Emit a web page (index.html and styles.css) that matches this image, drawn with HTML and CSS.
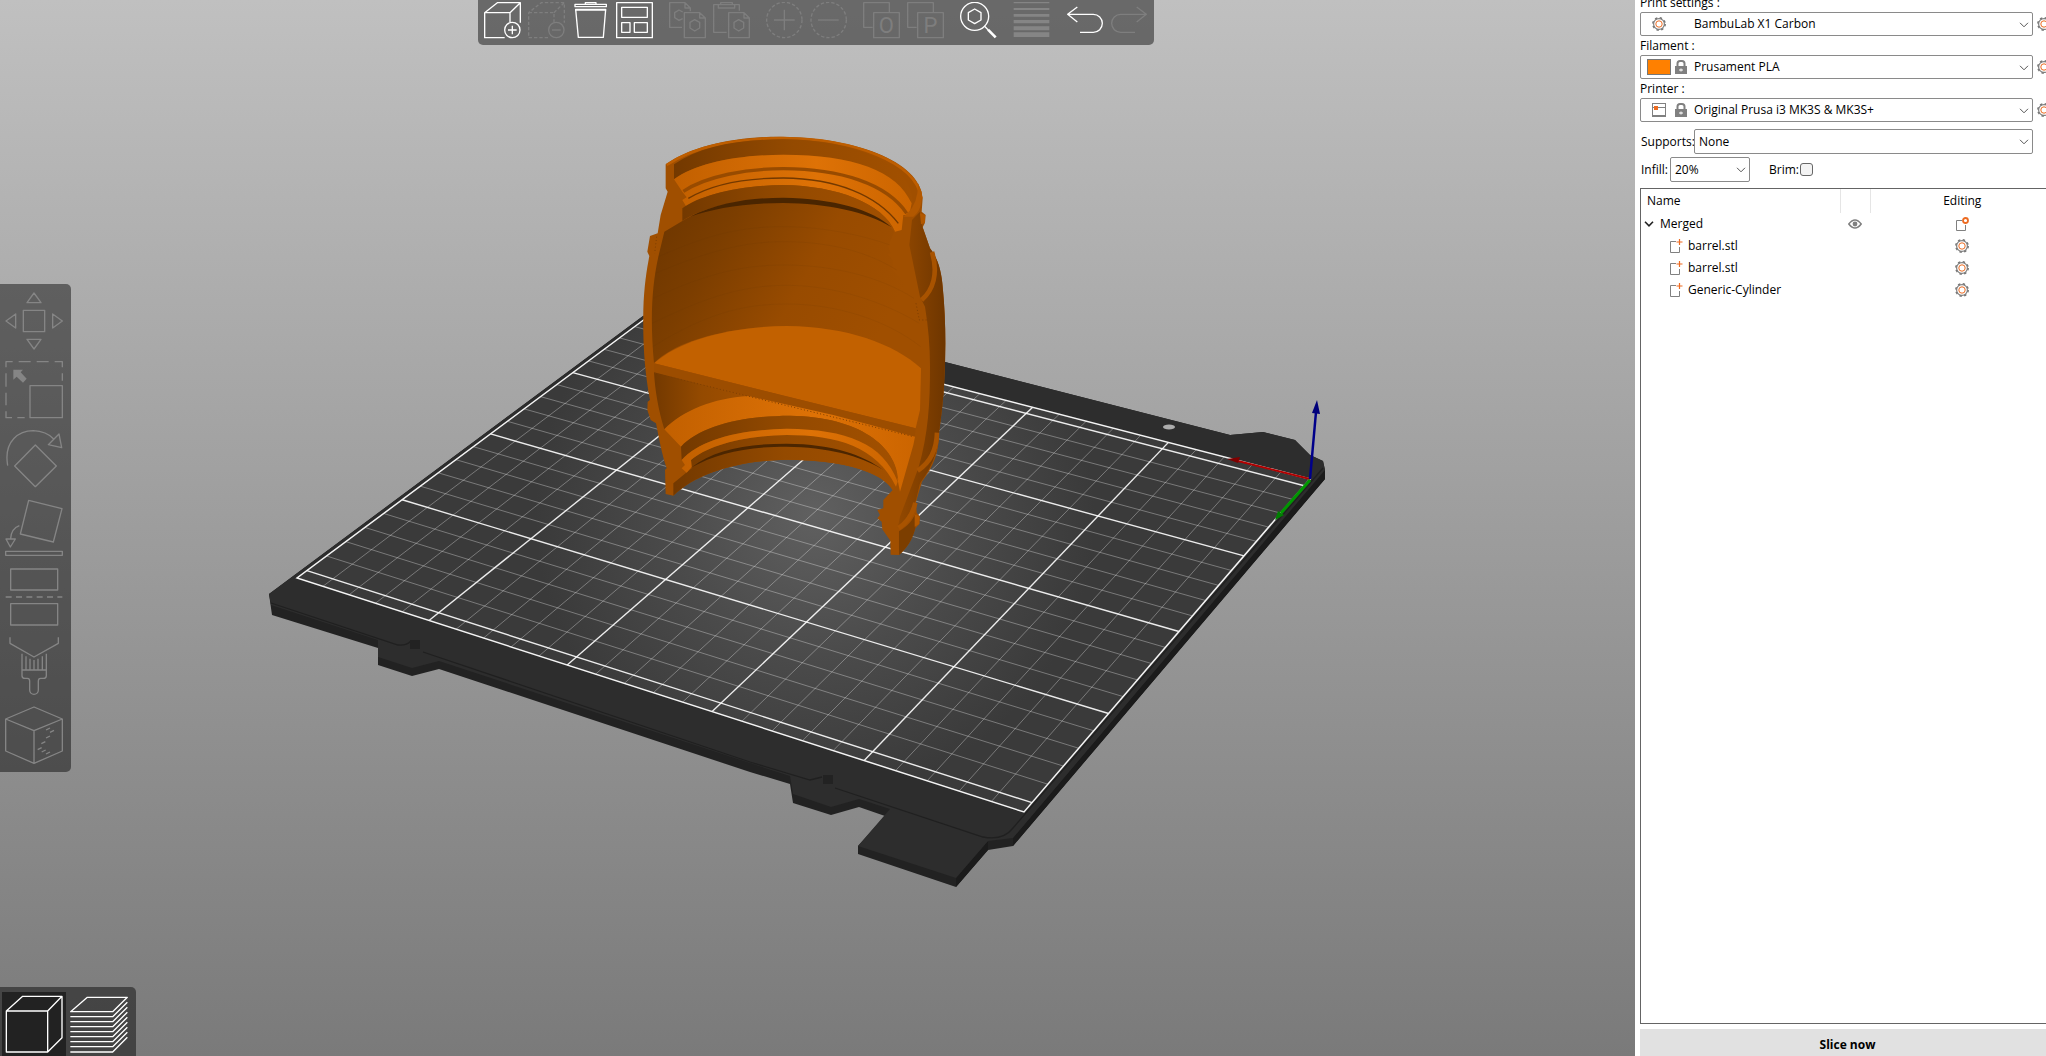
FILE: index.html
```html
<!DOCTYPE html>
<html lang="en">
<head>
<meta charset="utf-8">
<title>Plater</title>
<link rel="stylesheet" href="styles.css">
</head>
<body>
<svg class="defs" aria-hidden="true">
  <symbol id="cog" viewBox="0 0 14 14">
    <circle cx="7" cy="7" r="5.4" fill="none" stroke="#808080" stroke-width="1.2"/>
    <circle cx="7" cy="7" r="6.2" fill="none" stroke="#777" stroke-width="1.5" stroke-dasharray="2.4 2.47"/>
    <circle cx="7" cy="7" r="3.2" fill="none" stroke="#ed6b21" stroke-width="1"/>
  </symbol>
  <symbol id="chevron" viewBox="0 0 10 6"><path d="M1 .8 5 4.8 9 .8" fill="none" stroke="#555"/></symbol>
  <symbol id="lock" viewBox="0 0 12 14">
    <path d="M2.5 7V3.5Q2.5 1 5 1h2q2.500 0 2.500 2.500V7" fill="none" stroke="#808080" stroke-width="2"/>
    <path d="M0 6h12v8H0z" fill="#808080"/><path d="M4 10h4M6 8.500v3" stroke="#fff"/>
  </symbol>
  <symbol id="part" viewBox="0 0 14 14">
    <path d="M7 2.500H1.500v11h9V8" fill="none" stroke="#808080"/>
    <path d="M10.500 0v6M7.500 3h6" stroke="#ed6b21" stroke-width="1.200"/>
  </symbol>
</svg>
<div class="app">
  <main class="viewport">
    <svg class="scene" viewBox="0 0 1635 1056" preserveAspectRatio="xMidYMid slice" role="img" aria-label="Half barrel on the print bed">
      <defs>
        <radialGradient id="bedLight" gradientUnits="userSpaceOnUse" cx="815" cy="515" r="280">
          <stop offset="0" stop-color="#606060"/><stop offset=".5" stop-color="#4b4b4b"/><stop offset="1" stop-color="#3a3a3a"/>
        </radialGradient>
        <linearGradient id="cavity" x1="0" x2="1" y1="0" y2=".35">
          <stop offset="0" stop-color="#6b3500"/><stop offset=".3" stop-color="#7c3e00"/><stop offset=".65" stop-color="#984b00"/><stop offset="1" stop-color="#a04f00"/>
        </linearGradient>
        <linearGradient id="wall"><stop offset="0" stop-color="#733900"/><stop offset=".5" stop-color="#944a00"/><stop offset="1" stop-color="#a25000"/></linearGradient>
        <linearGradient id="lit"><stop offset="0" stop-color="#c26000"/><stop offset=".6" stop-color="#de7206"/><stop offset="1" stop-color="#cc6500"/></linearGradient>
        <linearGradient id="outer"><stop offset="0" stop-color="#944900"/><stop offset="1" stop-color="#6e3600"/></linearGradient>
      </defs>
      <path fill="#222" d="M700 299 643 316 269 594 272 615 378 648V665L412 676 439 669 750 772 790 784 793 803 831 815 859 807 885 816 858 846V854L956 887 988 850 1013 846 1325 479V470L1323 461 1310 455 1295 440 1263 432 1230 435 945 362Z"/>
      <path fill="#1b1b1b" d="M1013 838V846L1325 479 1325 469ZM956 878V887L988 850V841Z"/>
      <path fill="#2d2d2d" d="M700 299 643 316 269 594 271 605 378 640V657L412 668 439 661 750 763 790 776 793 794 831 807 859 799 890 809 858 846 956 878 988 841 1013 838 1325 470 1323 461 1310 455 1295 440 1263 432 1230 435 945 362Z"/>
      <path fill="none" stroke="#202020" stroke-width="1.300" d="M271 603 398 645Q406 646 411 641M423 652 750 762 810 780 822 777M835 788 983 837Q1003 841 1013 828L1323 468"/>
      <path fill="#222" d="M410 640h10v9h-10zM823 775h10v9h-10z"/>
      <ellipse cx="1169" cy="427" rx="6" ry="2.500" fill="#adadad"/>
      <path fill="url(#bedLight)" d="M1310 479 1024 812 297 578 657 310Z"/>
      <g id="grid" class="grid"></g>
      <path fill="none" stroke="#f4f4f4" stroke-width="1.500" d="M1310 479 1024 812 297 578 657 310Z"/>
      <g fill="none" stroke-width="2"><path stroke="#b00000" d="M1310 479 1238 461"/><path stroke="#00008a" stroke-width="2.500" d="M1310 479 1316 412"/><path stroke="#009600" stroke-width="3" d="M1310 480 1281 513"/></g>
      <path fill="#7f0000" d="M1227 459 1240 457 1238 463Z"/><path fill="#00007a" d="M1317 400 1312 413 1320 414Z"/><path fill="#008000" d="M1275 520 1278 511 1284 515Z"/>
      <g transform="translate(620 120) scale(.33333)">
        <path fill="#a04f00" d="M137 133C220 75 350 50 480 50 700 52 900 120 908 235L905 275 917 285 915 308 908 322 930 385C955 415 965 460 968 500 978 600 978 700 972 800 968 860 962 900 957 940 957 1000 940 1040 906 1085L888 1145 890 1178 900 1190 898 1212 886 1225C875 1265 860 1285 837 1305L812 1304 811 1262 787 1228 785 1205 772 1195 780 1185 772 1170 790 1165V1140L818 1110C790 1060 680 1020 500 1019 350 1022 230 1060 160 1127L137 1122 135 1050 140 1045C125 1000 118 960 108 910L92 900 82 870 83 845 90 840C75 760 68 680 70 570 72 500 80 450 88 408L82 395 90 348 113 340 122 285 143 215 137 205Z"/>
        <path fill="url(#cavity)" d="M133 335 187 303C250 262 350 240 490 240 650 242 770 270 822 335L805 380 812 400 804 402 818 420V450L870 505 888 560 900 600 903 745C820 670 680 620 500 618 300 622 160 670 102 730 90 600 95 500 115 410Z"/>
        <g fill="none" stroke="#5f3000" stroke-opacity=".1" stroke-width="3"><path d="M116 410C260 345 360 320 490 320 620 320 740 350 810 375"/><path d="M106 460C260 395 370 365 490 365 640 365 750 400 830 450M100 535C260 460 370 435 490 435 640 435 780 470 882 535M96 610C260 530 370 496 500 496 650 496 800 550 898 610M98 680C260 580 370 552 500 552 650 552 800 600 902 680"/></g>
        <path fill="#c26100" d="M102 730C180 660 330 620 500 618 680 620 820 670 903 745L900 870 887 925Z"/>
        <path fill="#9c4d00" d="M102 730 887 925 884 950 102 757Z"/>
        <path fill="url(#wall)" d="M102 757 385 828C280 840 190 870 133 928 115 870 105 810 102 757Z"/>
        <path fill="url(#lit)" d="M133 928C190 870 280 835 385 828L640 885 885 950 880 975 840 1115 833 1080C830 980 720 890 510 887 360 888 240 920 183 980Z"/>
        <path fill="url(#wall)" d="M183 980C240 920 360 888 510 887 720 890 830 980 835 1080 790 970 680 928 500 926 350 930 240 960 185 1020Z"/>
        <path fill="url(#wall)" d="M213 1020C260 980 360 948 500 945 650 945 770 980 828 1100L818 1110C790 1060 680 1020 500 1019 350 1022 230 1060 160 1127V1090L215 1045Z"/>
        <path fill="url(#lit)" d="M185 1020C240 960 350 930 500 926 680 928 790 970 833 1085L828 1100C770 980 650 945 500 945 360 948 260 980 213 1020L215 1040 200 1058 185 1045 195 1035Z"/>
        <path fill="#4c2600" d="M215 1042C280 990 380 971 500 971 640 972 730 1005 790 1050 720 1005 620 982 500 980 380 980 290 1000 215 1042Z"/>
        <path fill="none" stroke="#be5e00" stroke-width="8" d="M140 135C220 80 350 54 490 54 700 56 890 126 904 235"/>
        <path fill="url(#wall)" d="M162 133C240 80 350 58 490 58 700 60 870 130 878 240L875 250C830 150 700 105 490 104 340 106 230 130 162 178Z"/>
        <path fill="url(#lit)" d="M162 178C230 130 340 106 490 104 700 105 830 150 875 250L868 285H850L845 330 825 335C790 250 650 197 490 195 360 196 240 225 200 262L187 240 200 232 187 215Z"/>
        <path fill="none" stroke="#984b00" stroke-width="10" d="M190 214C260 168 380 146 490 146 660 147 800 190 860 280"/>
        <path fill="none" stroke="#733900" stroke-width="4" d="M205 235C280 190 380 174 490 174 650 176 770 225 835 310"/>
        <path fill="url(#wall)" d="M187 265C240 225 360 196 490 195 650 197 790 250 825 335 770 270 640 235 490 234 360 235 250 262 187 303Z"/>
        <path fill="#4a2500" d="M210 290C300 245 400 233 490 233 640 235 760 270 815 322 740 275 620 250 490 249 380 249 280 265 210 290Z"/>
        <path fill="url(#outer)" d="M868 375 876 300 900 275 908 322 930 385C955 415 965 460 968 500 978 600 978 700 972 800 968 860 962 900 957 940 955 1000 930 1050 900 1090L888 1140C870 1180 855 1205 833 1225L840 1190 895 1045C925 940 930 850 930 740 930 680 925 620 915 560L900 530Z"/>
        <path fill="none" stroke="#a85300" stroke-width="14" d="M905 540C940 510 955 460 936 396M893 1052C935 1025 950 985 951 938M836 1224C865 1205 880 1175 886 1148"/>
        <path fill="#7c3e00" d="M837 1234C865 1218 878 1200 887 1180L886 1225C875 1265 860 1285 837 1305Z"/>
        <path fill="#b25800" d="M880 290C905 270 907 240 905 215L894 190Q895 250 862 280L850 290ZM900 280l15 5v23l-12 5zM884 1182l14 8v22l-14 8z"/>
        <path fill="none" stroke="#7b3d00" stroke-width="3" stroke-dasharray="3 7" d="M105 760 880 950M888 550 898 600H922M110 350 104 400"/>
      </g>
    </svg>

    <div class="toolbar top-bar" role="toolbar" aria-label="Plater">
      <div class="group">
        <button aria-label="Add"><svg viewBox="42 6 111 111"><path d="M104 113H44V38L82 8H151V68M44 38H120V66M120 38 151 8"/><circle cx="127" cy="90" r="23"/><path d="M114 90h26M127 77v26"/></svg></button>
        <button aria-label="Delete" disabled><svg viewBox="174 6 111 111"><path stroke-dasharray="10 6" d="M234 113H176V38L214 8H283V68M176 38H252V66M252 38 283 8"/><circle cx="259" cy="90" r="23"/><path d="M246 90h26"/></svg></button>
        <button aria-label="Delete all"><svg viewBox="306 6 111 111"><path d="M315 13H409V20H315ZM346 13V8H378V13M317 28H407L400 112H325ZM315 30H409"/></svg></button>
        <button aria-label="Arrange"><svg viewBox="438 6 111 111"><path d="M440 8H547V113H440ZM455 22H532V52H455ZM455 68H480V97H455ZM493 68H532V97H493Z"/></svg></button>
      </div>
      <div class="group">
        <button aria-label="Copy" disabled><svg viewBox="597 6 111 111"><path d="M636 82H599V8H645L661 24V34M645 8V24H661M643 38H689L706 54V113H643ZM689 38V54H706M638 36 627 30 614 38V53L627 61 638 56M674 59 689 67V84L674 93 660 84V67Z"/></svg></button>
        <button aria-label="Paste" disabled><svg viewBox="729 6 111 111"><path d="M770 97H731V14H808V32M745 24V14H752V8H787V14H794V24ZM776 38H822L838 54V113H776ZM822 38V54H838M806 59 821 67V84L806 93 792 84V67Z"/></svg></button>
      </div>
      <div class="group">
        <button aria-label="Add instance" disabled><svg viewBox="888 6 111 111"><circle cx="943" cy="60" r="53" stroke-dasharray="10 6"/><path d="M912 60h62M943 29v62"/></svg></button>
        <button aria-label="Remove instance" disabled><svg viewBox="0 6 111 111"><circle cx="56" cy="60" r="53" stroke-dasharray="10 6"/><path d="M24 60h62"/></svg></button>
      </div>
      <div class="group">
        <button aria-label="Split to objects" disabled><svg viewBox="159 6 111 111"><path d="M188 82H161V8H238V36M191 38H268V113H191Z"/><text x="229" y="98" text-anchor="middle">O</text></svg></button>
        <button aria-label="Split to parts" disabled><svg viewBox="291 6 111 111"><path d="M320 82H293V8H370V36M323 38H400V113H323Z"/><text x="361" y="98" text-anchor="middle">P</text></svg></button>
      </div>
      <div class="group"><button aria-label="Search"><svg viewBox="450 6 111 111"><circle cx="494" cy="49" r="42"/><path d="M494 27 513 38V60L494 71 475 60V38ZM523 78 534 89"/><path stroke-width="8" d="M534 89 557 112"/></svg></button></div>
      <div class="group"><button aria-label="Variable layer height" disabled><svg viewBox="609 6 111 111"><path class="solid" d="M611 6h107v4H611zM611 24h107v6H611zM611 42h107v8H611zM611 60h107v10H611zM611 79h107v12H611zM611 97h107v14H611z"/></svg></button></div>
      <div class="group">
        <button aria-label="Undo"><svg viewBox="768 6 111 111"><path stroke-width="4" d="M802 21 773 43 802 66M773 43H850A27 27 0 0 1 850 97H810"/></svg></button>
        <button aria-label="Redo" disabled><svg viewBox="900 6 111 111"><path stroke-width="4" d="M980 21 1009 43 980 66M1009 43H932A27 27 0 0 0 932 97H975"/></svg></button>
      </div>
    </div>

    <div class="toolbar side-bar" role="toolbar" aria-label="Tools">
      <button aria-label="Move" disabled><svg viewBox="15 36 174 174"><path d="M70 91H134V155H70ZM102 39 123 68H81ZM102 207 81 178H123ZM18 123 47 102V144ZM187 123 158 102V144Z"/></svg></button>
      <button aria-label="Scale" disabled><svg viewBox="15 243 174 174"><path d="M90 317H187V413H90ZM18 262V245H38M56 245H92M110 245H146M164 245H187V262M187 280V302M18 280V320M18 338V376M18 394V413H36M52 413H74"/><path class="solid" d="M40 269H69L62 277 80 296 69 308 50 290 40 299Z"/></svg></button>
      <button aria-label="Rotate" disabled><svg viewBox="15 450 174 174"><path d="M106 495 169 558 106 620 44 558ZM23 557C10 480 60 452 100 452 125 453 148 463 161 477M177 462 185 503 145 494Z"/></svg></button>
      <button aria-label="Place on face" disabled><svg viewBox="15 -63 174 174"><path d="M86 -59 186 -34 160 66 61 42ZM58 17Q34 26 32 55M18 57H46L31 81ZM17 94H187V106H17Z"/></svg></button>
      <button aria-label="Cut" disabled><svg viewBox="15 144 174 174"><path d="M32 147H173V210H32ZM32 251H173V315H32Z"/><path stroke-width="5" stroke-dasharray="18 13" d="M17 231H187"/></svg></button>
      <button aria-label="Paint-on supports" disabled><svg viewBox="15 351 174 174"><path d="M30 352V370L102 411 175 370V352M66 401V450H139V401M78 409V448M90 416V448M102 420V448M114 416V448M127 409V448M66 450V467Q66 475 75 475H82Q89 475 89 483V510A13 13 0 0 0 115 510V483Q115 475 122 475H130Q139 475 139 467V450"/></svg></button>
      <button aria-label="Seam painting" disabled><svg viewBox="15 558 174 174"><path d="M102 561 187 597V693L102 730 17 693V597ZM17 597 102 632 187 597M102 632V730"/><path d="M138 630 150 624M150 637 162 631M138 654 150 648M124 671 136 665M113 689 125 683M125 696 137 690M138 702 150 696"/></svg></button>
    </div>

    <div class="toolbar view-bar" role="toolbar" aria-label="View">
      <button class="active" aria-label="3D editor view"><svg viewBox="6 48 192 192"><path d="M19 105H143V228H19ZM19 105 68 61H186V185L143 228M143 105 186 61"/></svg></button>
      <button aria-label="Preview"><svg viewBox="198 48 192 192"><path d="M212 107 262 64H382L338 107ZM211 122H338L382 79M211 137H338L382 94M211 152H338L382 109M211 167H338L382 124M211 182H338L382 139M211 197H338L382 154M211 212H338L382 169M211 228H338L382 184"/></svg></button>
    </div>
  </main>

  <aside class="panel">
    <form class="presets">
      <label for="print">Print settings :</label>
      <div class="preset"><div class="field">
        <select id="print"><option>BambuLab X1 Carbon</option></select>
        <span class="marks"><svg class="i14 inset"><use href="#cog"/></svg></span><svg class="chev"><use href="#chevron"/></svg></div>
        <button type="button" class="edit" aria-label="Edit print preset"><svg class="i14"><use href="#cog"/></svg></button></div>
      <label for="filament">Filament :</label>
      <div class="preset"><div class="field">
        <select id="filament"><option>Prusament PLA</option></select>
        <span class="marks"><span class="swatch"></span><svg class="lock"><use href="#lock"/></svg></span><svg class="chev"><use href="#chevron"/></svg></div>
        <button type="button" class="edit" aria-label="Edit filament preset"><svg class="i14"><use href="#cog"/></svg></button></div>
      <label for="printer">Printer :</label>
      <div class="preset"><div class="field">
        <select id="printer"><option>Original Prusa i3 MK3S &amp; MK3S+</option></select>
        <span class="marks"><svg class="i14 inset" viewBox="0 0 14 14"><path d="M.5 1v12M13.500 1v12M0 .5h14M0 4.500h14" fill="none" stroke="#808080"/><path d="M0 13h14" stroke="#808080" stroke-width="2"/><path d="M2 3h4v4H2z" fill="#ed6b21"/></svg><svg class="lock"><use href="#lock"/></svg></span><svg class="chev"><use href="#chevron"/></svg></div>
        <button type="button" class="edit" aria-label="Edit printer preset"><svg class="i14"><use href="#cog"/></svg></button></div>
      <div class="row supports"><label for="supports">Supports:</label>
        <div class="field plain"><select id="supports"><option>None</option></select><svg class="chev"><use href="#chevron"/></svg></div></div>
      <div class="row infill"><label for="infill">Infill:</label>
        <div class="field plain"><select id="infill"><option>20%</option></select><svg class="chev"><use href="#chevron"/></svg></div>
        <label for="brim" class="brim">Brim:</label><input type="checkbox" id="brim"></div>
    </form>
    <div class="objects">
      <table>
        <colgroup><col class="c-name"><col class="c-eye"><col></colgroup>
        <thead><tr><th>Name</th><th aria-label="Visible"></th><th>Editing</th></tr></thead>
        <tbody>
          <tr><td><span class="node root"><svg class="twist" viewBox="0 0 10 6"><path d="M1 .8 5 4.800 9 .8" fill="none" stroke="#222" stroke-width="1.600"/></svg>Merged</span></td>
            <td><svg class="i14" viewBox="0 0 14 14"><path d="M.8 7Q7-1 13.200 7 7 15 .8 7Z" fill="none" stroke="#808080" stroke-width="1.500"/><circle cx="7" cy="7" r="2.400" fill="#808080"/></svg></td>
            <td><svg class="i14" viewBox="0 0 14 14"><path d="M7 3.500H1.500v10h9V8" fill="none" stroke="#808080"/><circle cx="10.500" cy="3.500" r="2.500" fill="none" stroke="#ed6b21" stroke-width="1.800"/></svg></td></tr>
          <tr><td><span class="node"><svg class="i14"><use href="#part"/></svg>barrel.stl</span></td><td></td><td><svg class="i14"><use href="#cog"/></svg></td></tr>
          <tr><td><span class="node"><svg class="i14"><use href="#part"/></svg>barrel.stl</span></td><td></td><td><svg class="i14"><use href="#cog"/></svg></td></tr>
          <tr><td><span class="node"><svg class="i14"><use href="#part"/></svg>Generic-Cylinder</span></td><td></td><td><svg class="i14"><use href="#cog"/></svg></td></tr>
        </tbody>
      </table>
    </div>
    <button type="button" class="slice">Slice now</button>
  </aside>
</div>
<script src="grid.js"></script>
</body>
</html>
```
FILE: styles.css
```css
* { box-sizing: border-box; }
body { margin: 0; background: #fff; color: #000; font: 12px/16px "Open Sans", "Noto Sans", sans-serif; }
button { border: 0; padding: 0; background: none; font: inherit; color: inherit; }
svg { display: block; }
.defs { position: absolute; width: 0; height: 0; }
.app { display: flex; height: 100vh; overflow: hidden; }

.viewport { position: relative; flex: 1; min-width: 0; overflow: hidden; background: linear-gradient(#c0c0c0, #7a7a7a); }
.scene { position: absolute; inset: 0; width: 100%; height: 100%; }
.grid path { fill: none; stroke: #fff; stroke-opacity: .32; stroke-width: 1; }
.grid .major { stroke-opacity: .9; stroke-width: 1.4; }

.toolbar { position: absolute; display: flex; background: rgba(0, 0, 0, .45); }
.toolbar svg { width: 100%; height: 100%; fill: none; stroke: #fff; stroke-width: 4; stroke-linejoin: round; }
.toolbar :disabled svg { stroke: #858585; }
.toolbar .solid { fill: #858585; stroke: none; }
.toolbar text { font: 66px Roboto, "Liberation Sans", sans-serif; fill: #7e7e7e; stroke: none; }
.top-bar { top: 0; left: 478px; gap: 16px; padding: 2px 7px 6px 6px; border-radius: 0 0 5px 5px; }
.top-bar .group { display: flex; gap: 7px; }
.top-bar button { width: 37px; height: 37px; }
.top-bar :disabled svg { stroke: #7e7e7e; }
.side-bar { top: 284px; left: 0; flex-direction: column; gap: 11px; padding: 8px 8px 8px 5px; border-radius: 0 5px 5px 0; }
.side-bar button { width: 58px; height: 58px; }
.view-bar { bottom: 0; left: 0; padding: 5px 6px 0 2px; border-radius: 0 5px 0 0; }
.view-bar button { width: 64px; height: 64px; }
.view-bar .active { background: #222; }

.panel { display: flex; flex-direction: column; flex: none; width: 411px; padding-left: 5px; overflow: hidden; }
.presets { margin: -7px 0 6px; }
.presets > label { display: block; height: 19px; line-height: 20px; }
.preset { display: flex; align-items: center; gap: 4px; margin-right: -9px; }
.field { position: relative; flex: 1; height: 24px; }
select { display: block; width: 100%; height: 100%; margin: 0; padding: 0 24px 0 53px; appearance: none; border: 1px solid #8a8a8a; border-radius: 2px; background: #fff; color: #000; font: inherit; }
.plain { height: 25px; }
.plain select { padding-left: 4px; }
.marks { position: absolute; left: 7px; top: 0; height: 24px; display: flex; align-items: center; gap: 4px; pointer-events: none; }
.i14 { flex: none; width: 14px; height: 14px; }
.inset { margin: 0 5px; }
.swatch { width: 24px; height: 16px; background: #ff8000; border: 1px solid #777; }
.lock { width: 12px; height: 14px; }
.chev { position: absolute; right: 4px; top: 10px; width: 10px; height: 6px; pointer-events: none; }
.edit { flex: none; width: 18px; }
.row { display: flex; align-items: center; padding-left: 1px; }
.supports { margin: 7px 13px 3px 0; }
.supports label { width: 53px; }
.infill label { width: 29px; }
.infill .field { flex: none; width: 80px; }
.infill .brim { width: 31px; margin-left: 19px; }
#brim { width: 13px; height: 13px; margin: 0; appearance: none; border: 1px solid #666; border-radius: 3px; background: #f3f3f3; }

.objects { flex: 1; margin-right: -9px; border: 1px solid #646464; }
table { width: 100%; table-layout: fixed; border-collapse: collapse; }
.c-name { width: 199px; }
.c-eye { width: 30px; }
th, td { padding: 0; height: 22px; font-weight: 400; }
th { height: 24px; border-right: 1px solid #e5e5e5; }
th:first-child { text-align: left; padding-left: 6px; }
th:last-child { border: 0; }
td > svg { margin: 0 auto; }
.node { display: flex; align-items: center; gap: 5px; padding-left: 28px; }
.root { gap: 6px; padding-left: 3px; }
.twist { width: 10px; height: 6px; }
.slice { flex: none; height: 32px; margin: 5px -9px -5px 0; background: #e1e1e1; font-weight: 700; }
```
FILE: grid.js
```js
// Projects the 250 x 210 mm bed grid onto its four corners in the scene.
(function () {
  var W = 250, H = 210;
  var p0 = [1310, 479], p1 = [657, 310], p2 = [297, 578], p3 = [1024, 812];
  var dx1 = p1[0] - p2[0], dy1 = p1[1] - p2[1];
  var dx2 = p3[0] - p2[0], dy2 = p3[1] - p2[1];
  var sx = p0[0] - p1[0] + p2[0] - p3[0], sy = p0[1] - p1[1] + p2[1] - p3[1];
  var det = dx1 * dy2 - dx2 * dy1;
  var g = (sx * dy2 - dx2 * sy) / det, h = (dx1 * sy - sx * dy1) / det;

  function project(x, y) {
    var u = x / W, v = y / H, w = g * u + h * v + 1;
    return [0, 1].map(function (i) {
      return ((p1[i] - p0[i] + g * p1[i]) * u + (p3[i] - p0[i] + h * p3[i]) * v + p0[i]) / w;
    }).join(" ");
  }
  function line(x1, y1, x2, y2, major) {
    var el = document.createElementNS("http://www.w3.org/2000/svg", "path");
    el.setAttribute("d", "M" + project(x1, y1) + "L" + project(x2, y2));
    if (major) el.setAttribute("class", "major");
    document.getElementById("grid").appendChild(el);
  }
  for (var x = 10; x < W; x += 10) line(x, 0, x, H, x % 50 === 0);
  for (var y = 5; y < H; y += 10) line(0, y, W, y, (y - 5) % 50 === 0);
})();
```
